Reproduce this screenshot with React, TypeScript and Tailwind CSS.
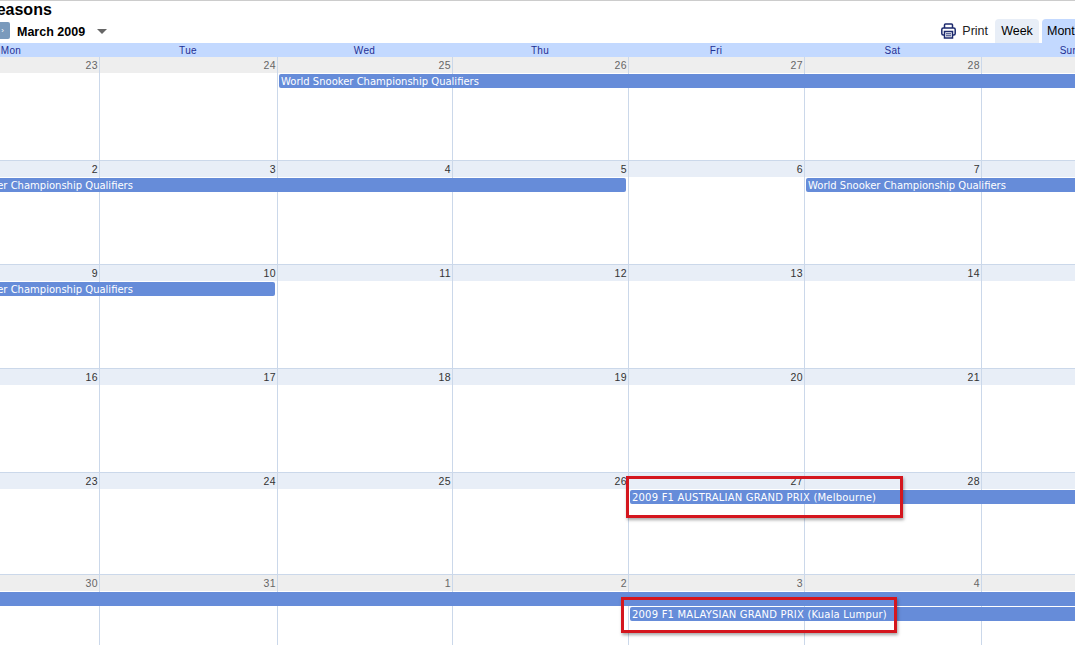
import React from "react";

type CalEvent = { start: number; span: number; lane: number; title?: string; wide?: boolean; roundL?: boolean; roundR?: boolean };
type Week = { height: string; muted: boolean; dates: number[]; events: CalEvent[] };

const SNOOKER = "World Snooker Championship Qualifiers";

const weeks: Week[] = [
  {
    height: "h-[104px]",
    muted: true,
    dates: [23, 24, 25, 26, 27, 28, 1],
    events: [{ start: 3, span: 5, lane: 2, title: SNOOKER, roundL: true }],
  },
  {
    height: "h-[104px]",
    muted: false,
    dates: [2, 3, 4, 5, 6, 7, 8],
    events: [
      { start: 1, span: 4, lane: 2, title: SNOOKER, roundR: true },
      { start: 6, span: 2, lane: 2, title: SNOOKER, roundL: true },
    ],
  },
  {
    height: "h-[104px]",
    muted: false,
    dates: [9, 10, 11, 12, 13, 14, 15],
    events: [{ start: 1, span: 2, lane: 2, title: SNOOKER, roundR: true }],
  },
  { height: "h-[104px]", muted: false, dates: [16, 17, 18, 19, 20, 21, 22], events: [] },
  {
    height: "h-[102px]",
    muted: false,
    dates: [23, 24, 25, 26, 27, 28, 29],
    events: [{ start: 5, span: 3, lane: 2, title: "2009 F1 AUSTRALIAN GRAND PRIX (Melbourne)", wide: true, roundL: true }],
  },
  {
    height: "h-[72px]",
    muted: true,
    dates: [30, 31, 1, 2, 3, 4, 5],
    events: [
      { start: 1, span: 7, lane: 2 },
      { start: 5, span: 3, lane: 3, title: "2009 F1 MALAYSIAN GRAND PRIX (Kuala Lumpur)", wide: true, roundL: true },
    ],
  },
];

const COLS = "grid-cols-[176px_178px_175px_176px_176px_177px_176px]";
const dayNames = ["Mon", "Tue", "Wed", "Thu", "Fri", "Sat", "Sun"];

function PrintIcon() {
  return (
    <svg width="15" height="16" viewBox="0 0 15 16" fill="none" stroke="#1c2a6e" strokeWidth="1.5" className="mt-[4px]">
      <path d="M3.5 5V2a1 1 0 0 1 1-1h6a1 1 0 0 1 1 1v3" />
      <rect x="0.8" y="5" width="13.4" height="7" rx="1.5" />
      <rect x="3.5" y="8.5" width="8" height="6.5" fill="#fff" />
      <path d="M5 10.8h5M5 12.8h5" strokeWidth="1" />
    </svg>
  );
}

function WeekRow({ week }: { week: Week }) {
  return (
    <div className={`grid ${COLS} ${week.height} grid-rows-[16px_15px_15px_1fr] border-b border-[#cbd8ea]`}>
      {week.dates.map((date, i) => (
        <React.Fragment key={i}>
          <div
            style={{ gridColumn: i + 1 }}
            className={`row-start-1 pr-[2px] text-right text-[10.5px] leading-[16px] tracking-[0.4px] ${
              week.muted ? "bg-[#eeeeee] text-[#666666]" : "bg-[#e8eef7] text-[#333333]"
            }`}
          >
            {date}
          </div>
          <div style={{ gridColumn: i + 1 }} className="row-start-1 row-end-5 border-r border-[#cbd8ea]" />
        </React.Fragment>
      ))}
      {week.events.map((ev, i) => (
        <div
          key={i}
          style={{ gridColumn: `${ev.start} / span ${ev.span}`, gridRow: ev.lane }}
          className={`z-10 ml-[1px] mr-[3px] mt-[1px] h-[14px] overflow-hidden whitespace-nowrap bg-[#668cd9] text-[10px] leading-[16px] text-white [font-family:'DejaVu_Sans',sans-serif] ${
            ev.start === 1 ? "pl-[10px]" : "pl-[2px]"
          } ${ev.wide ? "tracking-[0.2px]" : ""} ${ev.roundL ? "rounded-l-[2px]" : ""} ${ev.roundR ? "rounded-r-[2px]" : ""}`}
        >
          {ev.title}
        </div>
      ))}
    </div>
  );
}

export default function App() {
  return (
    <div className="relative h-[645px] w-[1075px] overflow-hidden bg-white font-['Liberation_Sans',Arial,sans-serif]">
      <div className="h-[1px] bg-[#cccccc]" />
      <h1 className="-ml-[14px] h-[18px] text-[16px] font-bold leading-[18px] text-black">Seasons</h1>
      <div className="flex h-[24px] items-start">
        <div className="-ml-[6px] mt-[3px] flex h-[17px] w-[16px] items-center justify-end rounded-[2px] bg-[#7a9abc] pr-[6px] text-[8px] text-white">
          ›
        </div>
        <span className="ml-[7px] mt-[5px] text-[12.5px] font-bold leading-[17px] text-black">March 2009</span>
        <div className="ml-[12px] mt-[10px] h-0 w-0 border-x-[5px] border-t-[5px] border-x-transparent border-t-[#666666]" />
        <div className="ml-auto flex items-start">
          <PrintIcon />
          <span className="ml-[6px] mt-[4px] text-[12.5px] leading-[17px] text-[#222222]">Print</span>
          <span className="ml-[7px] h-[24px] w-[44px] rounded-t-[4px] bg-[#e8eef7] pt-[4px] text-center text-[12.5px] leading-[17px] text-black">
            Week
          </span>
          <span className="ml-[3px] h-[24px] w-[33px] overflow-hidden whitespace-nowrap rounded-tl-[4px] bg-[#c3d9ff] pl-[5px] pt-[4px] text-[12.5px] leading-[17px] text-black">
            Month
          </span>
        </div>
      </div>
      <div className="-ml-[76px]">
        <div className={`grid ${COLS} h-[14px] bg-[#c3d9ff]`}>
          {dayNames.map((d) => (
            <div key={d} className="pr-[2px] pt-[1px] text-center text-[10px] leading-[14px] tracking-[0.3px] text-[#1f3094]">
              {d}
            </div>
          ))}
        </div>
        {weeks.map((w, i) => (
          <WeekRow key={i} week={w} />
        ))}
      </div>
      {/* red annotation boxes drawn over the screenshot */}
      <div className="absolute left-[626px] top-[476px] z-20 h-[42px] w-[277px] border-[3px] border-[#d4161e] shadow-[1px_2px_3px_rgba(0,0,0,0.35)]" />
      <div className="absolute left-[621px] top-[597px] z-20 h-[36px] w-[276px] border-[3px] border-[#d4161e] shadow-[1px_2px_3px_rgba(0,0,0,0.35)]" />
    </div>
  );
}
